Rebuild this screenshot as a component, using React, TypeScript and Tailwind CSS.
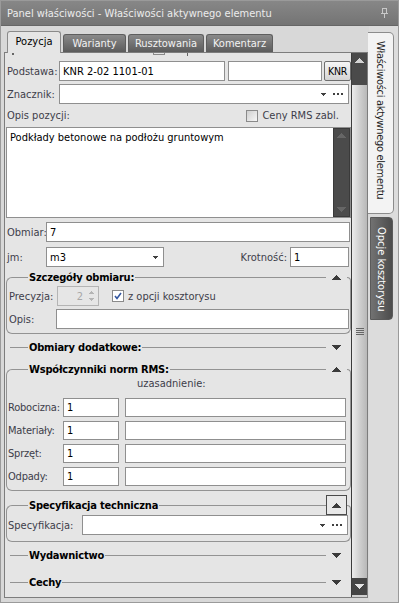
import React from "react";

const LINE = "border-[#939393]";

function TriDown({ c = "#3a3a3a" }: { c?: string }) {
  return (
    <svg width="9" height="5" viewBox="0 0 9 5" shapeRendering="crispEdges">
      <polygon points="0,0 9,0 4.5,5" fill={c} />
    </svg>
  );
}
function TriUp({ c = "#3a3a3a" }: { c?: string }) {
  return (
    <svg width="9" height="5" viewBox="0 0 9 5" shapeRendering="crispEdges">
      <polygon points="0,5 9,5 4.5,0" fill={c} />
    </svg>
  );
}
function SmallDown({ c = "#404040" }: { c?: string }) {
  return (
    <svg width="5" height="3" viewBox="0 0 5 3" shapeRendering="crispEdges">
      <polygon points="0,0 5,0 2.5,3" fill={c} />
    </svg>
  );
}
function SmallUp({ c = "#404040" }: { c?: string }) {
  return (
    <svg width="5" height="3" viewBox="0 0 5 3" shapeRendering="crispEdges">
      <polygon points="0,3 5,3 2.5,0" fill={c} />
    </svg>
  );
}
function Dots() {
  return (
    <svg width="10" height="2" viewBox="0 0 10 2" shapeRendering="crispEdges">
      <rect x="0" y="0" width="2" height="2" fill="#404040" />
      <rect x="4" y="0" width="2" height="2" fill="#404040" />
      <rect x="8" y="0" width="2" height="2" fill="#404040" />
    </svg>
  );
}

function Input({ value = "", className = "" }: { value?: string; className?: string }) {
  return (
    <div
      className={`h-full bg-white border border-[#8f8f8f] flex items-center px-[3px] text-black whitespace-nowrap overflow-hidden ${className}`}
    >
      {value}
    </div>
  );
}

function Combo({ value = "", dots = false, className = "" }: { value?: string; dots?: boolean; className?: string }) {
  return (
    <div className={`h-full bg-white border border-[#8f8f8f] flex items-center pl-[3px] pr-[5px] text-black ${className}`}>
      <span className="flex-1 whitespace-nowrap">{value}</span>
      <SmallDown />
      {dots && (
        <span className="ml-[7px] flex">
          <Dots />
        </span>
      )}
    </div>
  );
}

function CheckBox({ checked = false }: { checked?: boolean }) {
  return checked ? (
    <div className="w-[12px] h-[12px] border border-[#8a8a8a] bg-white flex items-center justify-center">
      <svg width="8" height="8" viewBox="0 0 8 8">
        <path d="M1 4 L3 6.5 L7 1" stroke="#3457a0" strokeWidth="1.6" fill="none" />
      </svg>
    </div>
  ) : (
    <div className="w-[12px] h-[12px] border border-[#8a8a8a] bg-gradient-to-br from-[#cfcfcf] to-[#f6f6f6]" />
  );
}

function GroupHeader({
  title,
  expanded,
  boxed = false,
}: {
  title: string;
  expanded: boolean;
  boxed?: boolean;
}) {
  return (
    <div className={`ml-[1px] flex items-center shrink-0 ${boxed ? "h-[14px]" : "h-[13px]"}`}>
      {expanded ? (
        <div className={`w-[22px] h-[7px] self-end border-l border-t ${LINE} rounded-tl-[6px]`} />
      ) : (
        <div className={`ml-[4px] w-[18px] h-[7px] self-end border-t ${LINE}`} />
      )}
      <span className="pl-[1px] pr-[1px] font-bold text-black whitespace-nowrap leading-[13px] tracking-[-0.2px]">{title}</span>
      <div className={`flex-1 h-[7px] self-end border-t ${LINE}`} />
      <div className="w-[21px] flex items-center justify-center">
        {boxed ? (
          <div className="w-[21px] h-[20px] shrink-0 border border-[#4a4a4a] bg-[#e8e8e8] flex items-center justify-center">
            <TriUp />
          </div>
        ) : expanded ? (
          <TriUp />
        ) : (
          <TriDown />
        )}
      </div>
      {expanded ? (
        <div className={`w-[4px] h-[7px] self-end border-t border-r ${LINE} rounded-tr-[5px]`} />
      ) : (
        <div className="w-[4px]" />
      )}
    </div>
  );
}

function GroupBody({ children, className = "" }: { children: React.ReactNode; className?: string }) {
  return (
    <div className={`ml-[1px] border-x border-b ${LINE} rounded-b-[6px] flex flex-col shrink-0 ${className}`}>
      {children}
    </div>
  );
}

function Content() {
  return (
    <div className="flex-1 min-w-0 flex flex-col overflow-hidden">
      {/* clipped row scrolled out of view */}
      <div className="h-[4px] flex items-start shrink-0">
        <div className="ml-[7px] w-[2px] h-[2px] bg-[#666]" />
        <div className="ml-[139px] w-[12px] h-[2px] border-x border-b border-[#8a8a8a]" />
        <div className="ml-[22px] w-px h-[3px] bg-[#666]" />
      </div>

      {/* Podstawa */}
      <div className="mt-[4px] h-[20px] flex items-center shrink-0">
        <span className="w-[54px] pl-[2px]">Podstawa:</span>
        <Input className="w-[166px]" value="KNR 2-02 1101-01" />
        <Input className="w-[94px] ml-[3px]" />
        <div className="ml-[2px] w-[27px] h-[20px] border border-[#6e6e6e] rounded-[2px] bg-gradient-to-b from-[#f6f6f6] to-[#d4d4d4] flex items-center justify-center text-black text-[10.5px] tracking-[-0.3px]">
          KNR
        </div>
      </div>

      {/* Znacznik */}
      <div className="mt-[3px] h-[20px] flex items-center shrink-0">
        <span className="w-[54px] pl-[2px]">Znacznik:</span>
        <Combo className="flex-1 mr-[2px]" dots />
      </div>

      {/* Opis pozycji */}
      <div className="mt-[3px] h-[17px] flex items-center shrink-0">
        <span className="pl-[2px] flex-1">Opis pozycji:</span>
        <CheckBox />
        <span className="ml-[4px] mr-[12px]">Ceny RMS zabl.</span>
      </div>

      {/* textarea */}
      <div className="mt-[3px] ml-[1px] h-[91px] bg-white border border-[#8f8f8f] flex shrink-0">
        <div className="flex-1 pl-[3px] pt-[3px] text-black">Podkłady betonowe na podłożu gruntowym</div>
        <div className="w-[17px] bg-[#4b4b4b] border border-[#3a3a3a] flex flex-col items-center justify-between py-[4px]">
          <TriUp c="#666666" />
          <TriDown c="#666666" />
        </div>
      </div>

      {/* Obmiar */}
      <div className="mt-[4px] h-[20px] flex items-center shrink-0">
        <span className="w-[41px] pl-[2px]">Obmiar:</span>
        <Input className="flex-1 mr-[1px]" value="7" />
      </div>

      {/* jm / Krotność */}
      <div className="mt-[5px] h-[20px] flex items-center shrink-0">
        <span className="w-[41px] pl-[2px]">jm:</span>
        <Combo className="w-[118px] pr-[5px]" value="m3" />
        <span className="flex-1 text-right pr-[3px]">Krotność:</span>
        <Input className="w-[59px] mr-[2px]" value="1" />
      </div>

      {/* Szczegóły obmiaru */}
      <div className="mt-[4px]" />
      <GroupHeader title="Szczegóły obmiaru:" expanded />
      <GroupBody className="pt-[2px] pb-[4px]">
        <div className="h-[20px] flex items-center">
          <span className="w-[50px] pl-[2px]">Precyzja:</span>
          <div className="w-[42px] h-[20px] border border-[#b4b4b4] bg-[#e6e6e6] flex items-center">
            <span className="flex-1 text-right pr-[4px] text-[#a8a8a8]">2</span>
            <div className="w-[9px] mr-[2px] flex flex-col items-center gap-[4px]">
              <SmallUp c="#b4b4b4" />
              <SmallDown c="#b4b4b4" />
            </div>
          </div>
          <div className="ml-[13px]">
            <CheckBox checked />
          </div>
          <span className="ml-[4px]">z opcji kosztorysu</span>
        </div>
        <div className="mt-[3px] h-[20px] flex items-center">
          <span className="w-[49px] pl-[2px]">Opis:</span>
          <Input className="flex-1 mr-[1px]" />
        </div>
      </GroupBody>

      {/* Obmiary dodatkowe */}
      <div className="mt-[7px]" />
      <GroupHeader title="Obmiary dodatkowe:" expanded={false} />

      {/* Współczynniki norm RMS */}
      <div className="mt-[9px]" />
      <GroupHeader title="Współczynniki norm RMS:" expanded />
      <GroupBody className="pt-[1px] pb-[4px]">
        <div className="h-[14px] pl-[130px] leading-[14px]">uzasadnienie:</div>
        <div className="mt-[7px] flex flex-col gap-[4px]">
          {[
            ["Robocizna:", "1"],
            ["Materiały:", "1"],
            ["Sprzęt:", "1"],
            ["Odpady:", "1"],
          ].map(([l, v]) => (
            <div key={l} className="h-[19px] flex items-center">
              <span className="w-[56px] pl-[1px] whitespace-nowrap tracking-[-0.2px]">{l}</span>
              <Input className="w-[56px]" value={v} />
              <Input className="flex-1 ml-[6px] mr-[4px]" />
            </div>
          ))}
        </div>
      </GroupBody>

      {/* Specyfikacja techniczna */}
      <div className="mt-[7px]" />
      <GroupHeader title="Specyfikacja techniczna" expanded boxed />
      <GroupBody className="pt-[3px] pb-[6px]">
        <div className="h-[20px] flex items-center">
          <span className="w-[75px] pl-[1px]">Specyfikacja:</span>
          <Combo className="flex-1 mr-[2px]" dots />
        </div>
      </GroupBody>

      {/* Wydawnictwo */}
      <div className="mt-[7px]" />
      <GroupHeader title="Wydawnictwo" expanded={false} />

      {/* Cechy */}
      <div className="mt-[14px]" />
      <GroupHeader title="Cechy" expanded={false} />
    </div>
  );
}

function Scrollbar() {
  return (
    <div className="w-[16px] flex flex-col border-l border-[#3c3c3c] bg-[#d0d0d0]">
      <div className="h-[32px] bg-[#4a4a4a] flex justify-center pt-[5px]">
        <TriUp c="#d4d4d4" />
      </div>
      <div className="flex-1 bg-gradient-to-r from-[#ececec] via-[#d0d0d0] to-[#b8b8b8] flex items-center justify-center">
        <div className="w-[8px] flex flex-col gap-[1px]">
          <div className="h-px bg-[#666]" />
          <div className="h-px bg-[#666]" />
          <div className="h-px bg-[#666]" />
          <div className="h-px bg-[#666]" />
        </div>
      </div>
      <div className="h-[17px] bg-[#454545] flex items-center justify-center">
        <TriDown c="#e4e4e4" />
      </div>
      <div className="h-[2px] bg-[#cfcfcf]" />
    </div>
  );
}

function Tabs() {
  const inactive =
    "h-[18px] flex items-center justify-center border border-b-0 border-[#5e5e5e] rounded-t-[3px] bg-gradient-to-b from-[#8a8a8a] to-[#5c5c5c] text-[#f2f2f2] whitespace-nowrap";
  return (
    <div className="h-[26px] shrink-0 flex items-end pl-[6px]">
      <div className="relative z-10 -mb-px w-[54px] h-[22px] flex items-center justify-center border border-b-0 border-[#8a8a8a] rounded-t-[3px] bg-[#e5e5e5] text-black pb-[2px]">
        Pozycja
      </div>
      <div className={`ml-[2px] w-[63px] ${inactive}`}>Warianty</div>
      <div className={`ml-[2px] w-[76px] ${inactive}`}>Rusztowania</div>
      <div className={`ml-[2px] w-[67px] ${inactive}`}>Komentarz</div>
    </div>
  );
}

function RightTabs() {
  return (
    <div className="flex-1 flex flex-col pt-[6px] bg-[#dcdcdc]">
      <div className="-ml-px w-[26px] h-[182px] bg-[#f3f3f3] border border-l-0 border-[#8c8c8c] rounded-r-[5px] flex justify-center pt-[8px] text-[#1e1e1e] overflow-hidden tracking-[-0.3px]">
        <span className="[writing-mode:vertical-rl] whitespace-nowrap">Właściwości aktywnego elementu</span>
      </div>
      <div className="mt-[3px] ml-px w-[23px] h-[103px] bg-gradient-to-r from-[#727272] to-[#4c4c4c] border border-[#5a5a5a] rounded-r-[4px] flex justify-center pt-[9px] text-white overflow-hidden">
        <span className="[writing-mode:vertical-rl] whitespace-nowrap">Opcje kosztorysu</span>
      </div>
    </div>
  );
}

function Pin() {
  return (
    <svg width="7" height="10" viewBox="0 0 7 10" shapeRendering="crispEdges">
      <rect x="1.5" y="0.5" width="4" height="5" fill="none" stroke="#c8c8c8" />
      <rect x="0" y="5" width="7" height="1" fill="#c8c8c8" />
      <rect x="3" y="6" width="1" height="4" fill="#c8c8c8" />
    </svg>
  );
}

export default function App() {
  return (
    <div className="w-[399px] h-[603px] flex flex-col bg-[#d8d8d8] border border-[#9a9a9a] text-[11px] leading-[13px] text-[#3d3d4a] overflow-hidden [font-family:'DejaVu_Sans_Condensed','Liberation_Sans',Arial,sans-serif]">
      <div className="h-[25px] shrink-0 flex items-center pl-[6px] pr-[10px] bg-gradient-to-b from-[#878787] to-[#747474] border-b border-[#666666]">
        <span className="flex-1 text-[#ececec] whitespace-nowrap">
          Panel właściwości - Właściwości aktywnego elementu
        </span>
        <Pin />
      </div>
      <div className="flex-1 flex min-h-0">
        <div className="w-[368px] flex flex-col">
          <Tabs />
          <div className="flex-1 ml-[3px] mr-[1px] mb-[4px] border border-[#7d7d7d] bg-[#e5e5e5] flex min-h-0">
            <Content />
            <Scrollbar />
          </div>
        </div>
        <RightTabs />
      </div>
    </div>
  );
}
